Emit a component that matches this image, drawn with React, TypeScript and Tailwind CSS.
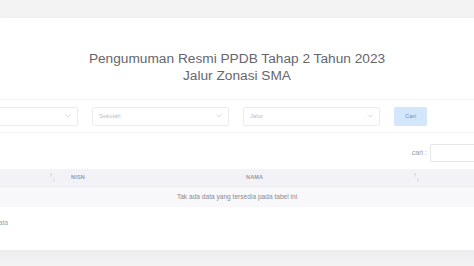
import React from "react";

const Chevron = () => (
  <svg width="6" height="4" viewBox="0 0 6 4" className="shrink-0">
    <path d="M0.5 0.5 L3 3 L5.5 0.5" fill="none" stroke="#d2d2d6" strokeWidth="0.8" />
  </svg>
);

const SortIcon = () => (
  <svg width="5" height="9" viewBox="0 0 5 9" className="shrink-0">
    <path d="M1 0.5 V4 M1 0.5 L0 1.8 M1 0.5 L2 1.8" fill="none" stroke="#c8c8d0" strokeWidth="0.6" />
    <path d="M4 5 V8.5 M4 8.5 L3 7.2 M4 8.5 L5 7.2" fill="none" stroke="#d6d6dc" strokeWidth="0.6" />
  </svg>
);

function Select({ label, width, className = "" }: { label: string; width: string; className?: string }) {
  return (
    <div
      className={`h-[19px] ${width} border border-[#ececef] rounded-[2px] bg-white flex items-center justify-between px-[6px] ${className}`}
    >
      <span className="text-[6px] text-[#bdbdc3]">{label}</span>
      <Chevron />
    </div>
  );
}

export default function App() {
  return (
    <div
      className="w-[474px] h-[266px] overflow-hidden bg-[#f1f1f2] flex flex-col"
      style={{ fontFamily: '"Liberation Sans", Arial, sans-serif' }}
    >
      <div className="h-[18px] bg-[#f3f3f4] shrink-0" />
      <div className="h-[232px] bg-white shrink-0 flex flex-col shadow-[0_0_3px_rgba(0,0,0,0.04)]">
        <div className="pt-[32px] flex flex-col items-center text-[13.7px] leading-[17px] text-[#66666e]">
          <div>Pengumuman Resmi PPDB Tahap 2 Tahun 2023</div>
          <div>Jalur Zonasi SMA</div>
        </div>
        <div className="mt-[15px] border-y border-[#f4f4f6] h-[34px] flex items-center">
          <Select label="" width="w-[80px]" className="-ml-[2px]" />
          <Select label="Sekolah" width="w-[137px]" className="ml-[14px]" />
          <Select label="Jalur" width="w-[137px]" className="ml-[14px]" />
          <div className="ml-[14px] h-[19px] w-[33px] rounded-[2px] bg-[#d3e6fc] flex items-center justify-center text-[6px] text-[#6f93c2]">
            Cari
          </div>
        </div>
        <div className="mt-[11px] flex items-center justify-end h-[18px]">
          <span className="text-[7px] text-[#9a9aa2] mr-[3px]">cari :</span>
          <div className="h-[18px] w-[46px] -mr-[2px] border border-[#e6e6e9] rounded-[2px] bg-white" />
        </div>
        <div className="mt-[7px] h-[18px] bg-[#f3f3f7] border-b border-[#ececf0] flex items-center">
          <div className="w-[50px]" />
          <SortIcon />
          <span className="ml-[16px] text-[5.5px] font-bold text-[#9a9aa8] tracking-[0.2px]">NISN</span>
          <div className="w-[161px]" />
          <span className="text-[5.5px] font-bold text-[#9a9aa8] tracking-[0.2px]">NAMA</span>
          <div className="w-[151px]" />
          <SortIcon />
        </div>
        <div className="h-[20px] bg-[#f8f8fa] flex items-center justify-center text-[6.6px] text-[#8a8a92]">
          Tak ada data yang tersedia pada tabel ini
        </div>
        <div className="mt-[11px] flex">
          <div className="-ml-[150px] w-[158px] text-right whitespace-nowrap text-[6.6px] text-[#a0a0a8]">
            Menampilkan 0 sampai 0 dari 0 data
          </div>
        </div>
      </div>
      <div className="flex-1 bg-gradient-to-b from-[#ececee] to-[#f3f3f4]" />
    </div>
  );
}
